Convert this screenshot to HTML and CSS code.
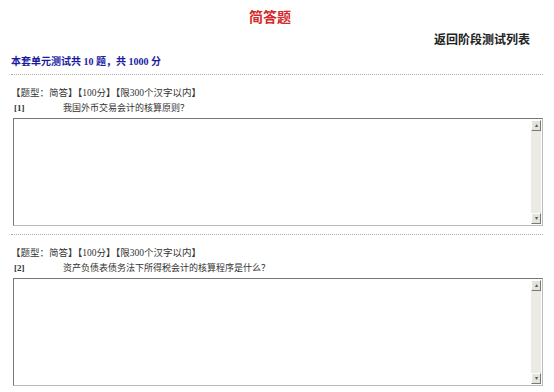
FILE: index.html
```html
<!DOCTYPE html>
<html lang="zh-CN">
<head>
    <meta charset="UTF-8">
    <meta name="viewport" content="width=device-width, initial-scale=1.0">
    <link rel="stylesheet" href="styles.css">
    <title>简答题</title>
</head>
<body>
    <div class="page">
        <h1 class="title">简答题</h1>
        <div class="back"><a href="#">返回阶段测试列表</a></div>
        <div class="summary">本套单元测试共 10 题，共 1000 分</div>

        <div class="question">
            <div class="q-type">【题型：简答】【100分】【限300个汉字以内】</div>
            <div class="q-row">
                <span class="q-no">[1]</span>
                <span class="q-text">我国外币交易会计的核算原则？</span>
            </div>
            <div class="answer">
                <textarea class="answer-input"></textarea>
                <div class="scrollbar">
                    <span class="sb-btn">&#9652;</span>
                    <span class="sb-track"></span>
                    <span class="sb-btn">&#9662;</span>
                </div>
            </div>
        </div>

        <div class="question">
            <div class="q-type">【题型：简答】【100分】【限300个汉字以内】</div>
            <div class="q-row">
                <span class="q-no">[2]</span>
                <span class="q-text">资产负债表债务法下所得税会计的核算程序是什么？</span>
            </div>
            <div class="answer">
                <textarea class="answer-input"></textarea>
                <div class="scrollbar">
                    <span class="sb-btn">&#9652;</span>
                    <span class="sb-track"></span>
                    <span class="sb-btn">&#9662;</span>
                </div>
            </div>
        </div>
    </div>
</body>
</html>
```

FILE: styles.css
```css
body {
    margin: 0;
    padding: 0;
    background: #fff;
    font-family: "Liberation Serif", "Noto Sans CJK SC", serif;
    color: #333;
}
.page {
    padding: 0 11px;
}
.title {
    margin: 0;
    padding: 10px 14px 0 0;
    font-size: 14px;
    line-height: 16px;
    text-align: center;
    color: #d42a2a;
}
.back {
    margin-top: 6px;
    padding-right: 13px;
    text-align: right;
    font-size: 12px;
    font-weight: bold;
    line-height: 16px;
}
.back a {
    color: #222;
    text-decoration: none;
}
.summary {
    margin-top: 7px;
    padding-bottom: 5px;
    font-size: 10px;
    font-weight: bold;
    line-height: 14px;
    color: #1a1aa0;
    border-bottom: 1px dotted #aaa;
}
.question {
    padding: 11px 0 8px;
    border-bottom: 1px dotted #aaa;
}
.q-type,
.q-row {
    font-size: 9px;
    line-height: 14px;
}
.q-type {
    font-size: 9.5px;
}
.q-row {
    display: flex;
    margin-top: 1px;
}
.q-no {
    width: 49px;
    padding-left: 3px;
    font-weight: bold;
}
.answer {
    display: flex;
    margin: 3px 0 0 2px;
    height: 106px;
    border: 1px solid #bbb;
    border-top-color: #777;
    border-left-color: #777;
    background: #fff;
}
.answer-input {
    flex: 1;
    border: none;
    outline: none;
    resize: none;
    padding: 2px;
    font-size: 12px;
    font-family: inherit;
}
.scrollbar {
    display: flex;
    flex-direction: column;
    width: 10px;
    margin: 1px 1px 1px 0;
    background: #ebeae4;
}
.sb-btn {
    height: 9px;
    font-size: 6px;
    line-height: 9px;
    text-align: center;
    color: #555;
    background: #e4e3dc;
    border: 1px solid #fff;
    border-right-color: #777;
    border-bottom-color: #777;
}
.sb-track {
    flex: 1;
}
```
